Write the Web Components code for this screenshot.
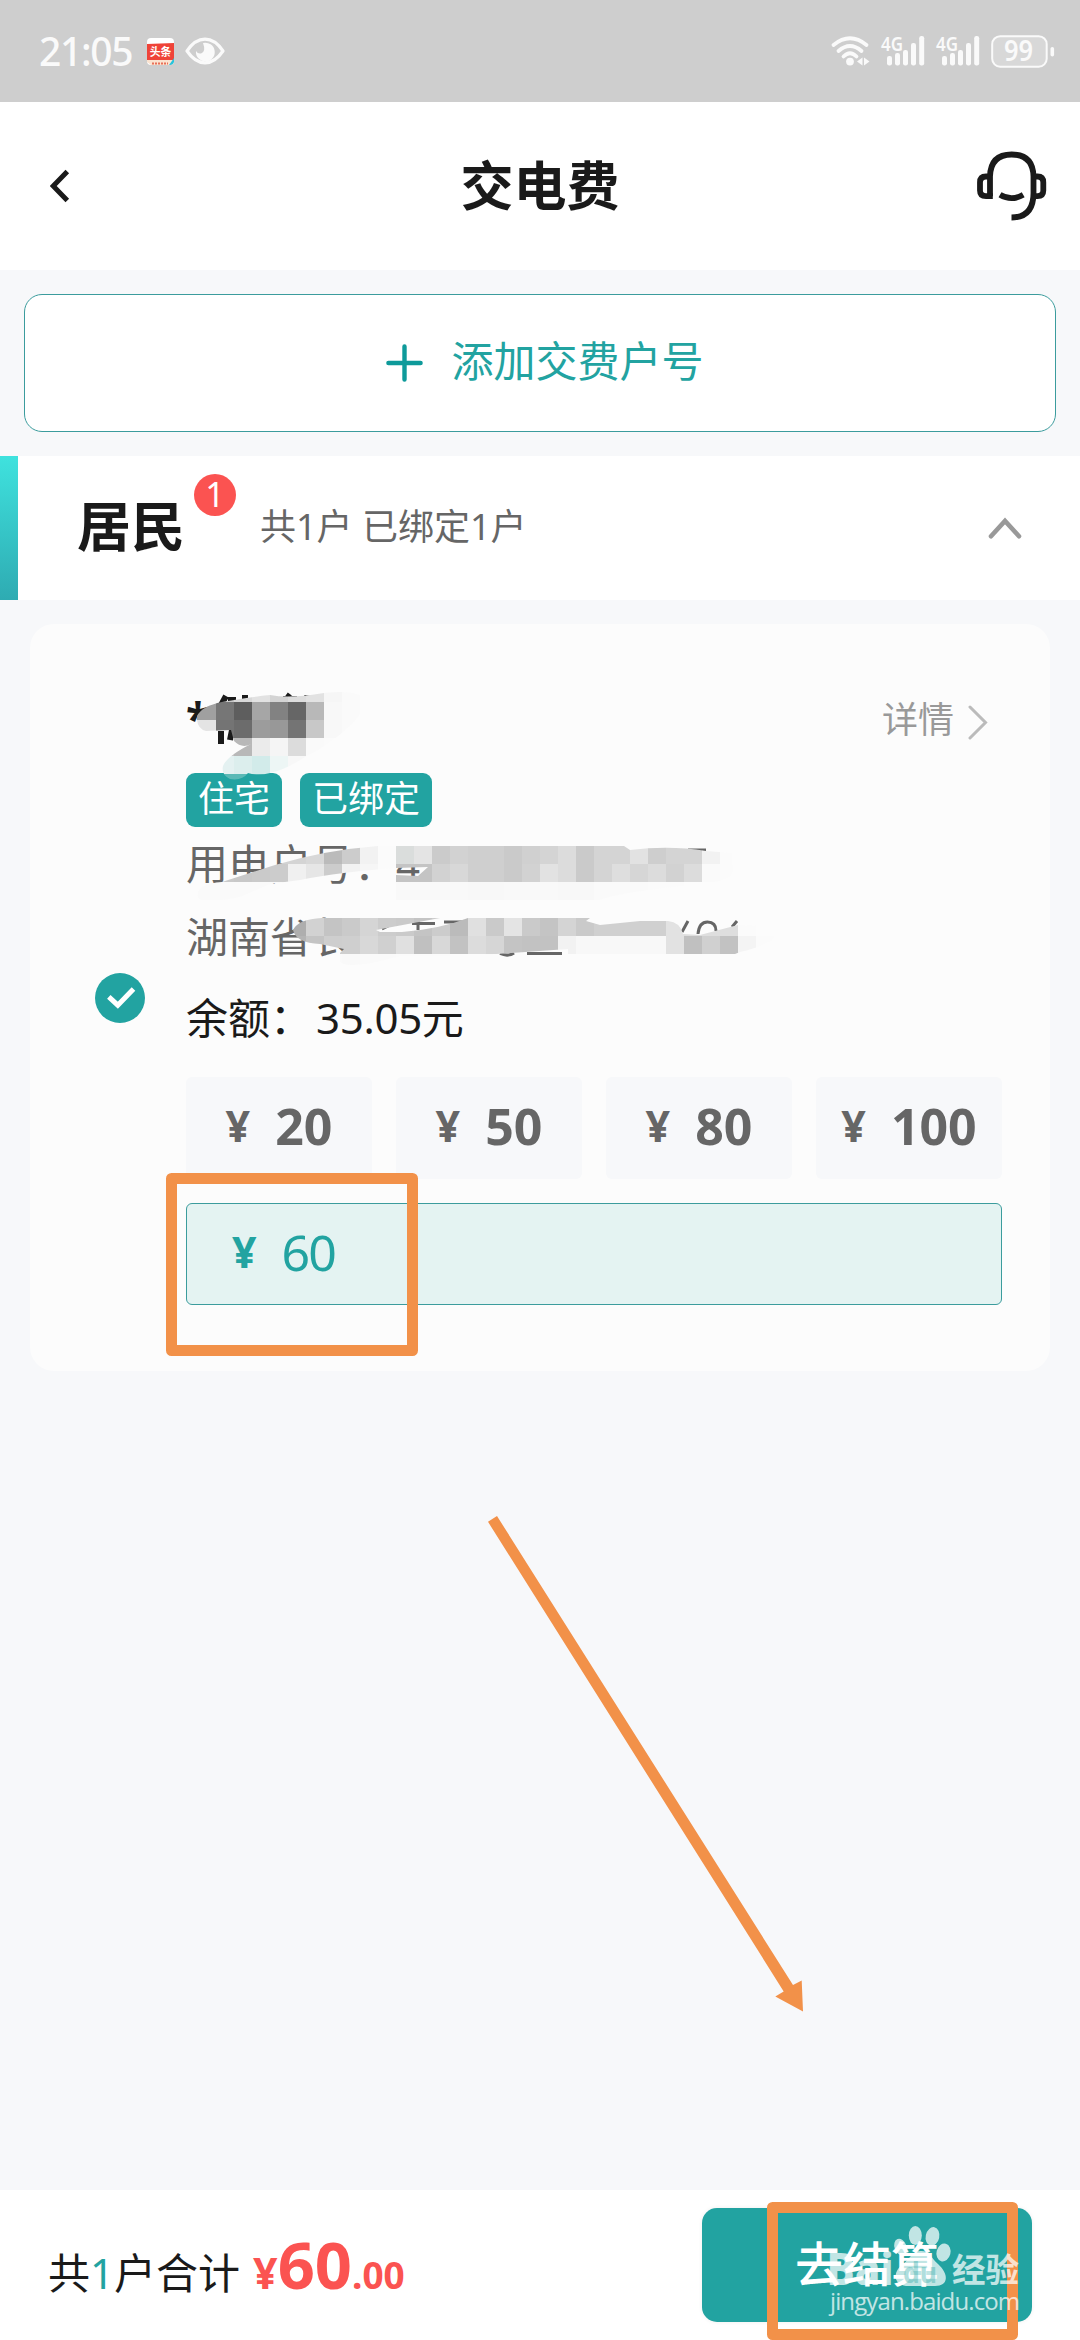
<!DOCTYPE html>
<html lang="zh-CN">
<head>
<meta charset="utf-8">
<title>交电费</title>
<style>
  html, body { margin: 0; padding: 0; }
  body {
    width: 1080px; height: 2340px; overflow: hidden; background: #f7f8fa; color: #1a1a1a;
    font-family: "Noto Sans", "Noto Sans CJK SC", sans-serif;
    --teal: #22a3a1; --red: #fb5351; --orange: #f29149;
  }
</style>
</head>
<body>
<pay-page>
  <status-bar></status-bar>
  <nav-header>交电费</nav-header>
  <add-account>添加交费户号</add-account>
  <group-header count="1">居民<span slot="note">共1户 已绑定1户</span></group-header>
  <account-card></account-card>
  <checkout-bar slot="footer"></checkout-bar>
  <page-marks slot="over"></page-marks>
</pay-page>
<script>
const define = (name, html, setup) => customElements.define(name, class extends HTMLElement {
  constructor() {
    super();
    const t = document.createElement('template');
    t.innerHTML = html;
    this.attachShadow({ mode: 'open' }).append(t.content.cloneNode(true));
  }
  connectedCallback() { if (setup) setup(this, this.shadowRoot); }
});

define('pay-page', `
<style>
  :host { display: flex; flex-direction: column; width: 1080px; height: 2340px; position: relative; overflow: hidden; }
  main { flex: 1; display: flex; flex-direction: column; }
</style>
<main><slot></slot></main><slot name="footer"></slot><slot name="over"></slot>`);

define('signal-icon', `
<style>:host { display: block; width: 44px; height: 30px; } svg { display: block; overflow: visible; } text { font: 600 20.5px "Noto Sans", sans-serif; }</style>
<svg width="44" height="30" viewBox="0 0 44 30" fill="#fafafa">
  <text x="0" y="15" textLength="22" lengthAdjust="spacingAndGlyphs">4G</text>
  <rect x="6" y="20" width="5" height="9.5" rx="2.2"/><rect x="14" y="17" width="5" height="12.5" rx="2.2"/>
  <rect x="22" y="14" width="5" height="15.5" rx="2.2"/><rect x="30" y="7" width="5" height="22.5" rx="2.2"/>
  <rect x="38.2" y="0" width="5" height="29.5" rx="2.2"/>
</svg>`);

define('status-bar', `
<style>
  :host { display: flex; align-items: center; justify-content: space-between; height: 102px; background: #cecece; color: #fafafa; padding: 0 25px 0 39px; box-sizing: border-box; }
  div { display: flex; align-items: center; }
  .time { font-size: 39px; line-height: 50px; width: 108px; font-weight: 500; letter-spacing: -1.3px; }
  svg { display: block; overflow: visible; }
  .eye { margin-left: 11px; }
  signal-icon { margin-left: 11px; }
  .bat { margin-left: 11px; }
</style>
<div><span class="time">21:05</span>
  <svg width="27" height="27" viewBox="0 0 27 27"><rect width="27" height="27" rx="4" fill="#fff"/><path d="M0 6L27 5V23L0 24Z" fill="#ef4338"/><path d="M0 22H27V24Q26 27 23 27H4L0 24Z" fill="#fbe3d0"/><path d="M22 27L27 20V24Q26 27 23 27Z" fill="#28c3dc"/><path d="M5 25.4H21" stroke="#e87058" stroke-width="2" stroke-dasharray="2 1"/><text x="2.800" y="17.800" font-size="10.8" font-weight="700" fill="#fff" font-family="Noto Sans CJK SC">头条</text></svg>
  <svg class="eye" width="40" height="28" viewBox="0 0 40 28"><path d="M2 14Q10 2.2 20 2.2Q30 2.2 38 14Q30 25.8 20 25.8Q10 25.8 2 14Z" fill="none" stroke="#fafafa" stroke-width="3.2" stroke-linejoin="round"/><path d="M18 6A9.4 9.4 0 1 1 11 14Q13 17.4 16.5 16.3Q21 14 18 6Z" fill="#fafafa"/></svg>
</div>
<div>
  <svg width="39" height="30" viewBox="0 0 39 30"><g fill="none" stroke="#fafafa" stroke-width="3.8" stroke-linecap="round"><path d="M2.5 9Q19 -4.5 35.5 9"/><path d="M7.5 15Q19 5 30.5 15"/><path d="M12.5 20.5Q19 14.2 25.5 20.5"/></g><circle cx="19" cy="25.6" r="3.9" fill="#fafafa"/><path d="M31.5 21.5V29.5L26 25.5ZM33 21.5V29.5L38.5 25.5Z" fill="#fafafa"/></svg>
  <signal-icon></signal-icon><signal-icon></signal-icon>
  <svg class="bat" width="64" height="33" viewBox="0 0 64 33"><rect x="1.2" y="1.2" width="54.5" height="30.5" rx="8" fill="#d8d8d8" stroke="#fafafa" stroke-width="2"/><rect x="59.5" y="12" width="3.6" height="9.5" rx="1.8" fill="#fafafa"/><text x="13" y="26" font-size="28" font-weight="600" textLength="29" lengthAdjust="spacingAndGlyphs" fill="#fafafa" font-family="Noto Sans">99</text></svg>
</div>`);

define('nav-header', `
<style>
  :host { display: flex; align-items: center; justify-content: space-between; height: 168px; background: #fff; padding: 0 33px 0 50px; box-sizing: border-box; }
  h1 { margin: 0; font-size: 53px; line-height: 70px; font-weight: 700; }
  svg { display: block; } .l { width: 53px; }
</style>
<div class="l"><svg width="20" height="34" viewBox="0 0 20 34" fill="none" stroke="#1a1a1a" stroke-width="5"><path d="M17.3 2.5L3.2 17L17.3 31.5"/></svg></div>
<h1><slot></slot></h1>
<svg width="70" height="70" viewBox="0 0 70 70" fill="none" stroke="#1a1a1a" stroke-width="5.8"><path d="M13 45.2V25.5Q13.500 3.500 34.7 3.5Q56 3.500 56.5 25.5V42Q56.500 66.500 34.5 66.5"/><path d="M13 25.5H9Q3 25.5 3 31.5V39.5Q3 45.2 9 45.2H15.8"/><path d="M56.5 25.5H60.5Q66.3 25.5 66.3 31.5V39.5Q66.3 45.2 60.5 45.2H56.5"/><path d="M23 43.8Q34.5 50.5 46.2 43.8"/></svg>`);

define('add-account', `
<style>
  :host { display: flex; align-items: center; justify-content: center; gap: 28px; height: 138px; box-sizing: border-box; margin: 24px; border: 1px solid #3b9c9d; border-radius: 18px; background: #fff; color: var(--teal); font-size: 42px; line-height: 60px; padding: 0 0 4px 10px; }
  svg { display: block; position: relative; top: 2px; }
</style>
<svg width="37" height="38" viewBox="0 0 37 38" stroke="#0e9a9a" stroke-width="4.4" stroke-linecap="round"><path d="M2.4 19H34.6M18.5 2.4V35.6"/></svg><slot></slot>`);

define('group-header', `
<style>
  :host { display: flex; align-items: center; height: 144px; background: #fff; box-sizing: border-box; padding-right: 58px; }
  .bar { width: 18px; height: 144px; background: linear-gradient(#3fe2de, #2eabb2); margin-right: 59px; }
  .name { font-size: 54px; font-weight: 700; line-height: 70px; margin-bottom: 5px; }
  .badge { align-self: flex-start; margin: 18px 0 0 9px; width: 42px; height: 42px; border-radius: 50%; background: var(--red); color: #fff; font-size: 34px; line-height: 40px; text-align: center; }
  .note { font-size: 36px; line-height: 50px; color: #666; margin: 0 auto 3px 24px; white-space: nowrap; }
  svg { display: block; }
</style>
<div class="bar"></div><span class="name"><slot></slot></span><span class="badge"></span><span class="note"><slot name="note"></slot></span>
<svg width="34" height="22" viewBox="0 0 34 22" fill="none" stroke="#999" stroke-width="4.6" stroke-linecap="round"><path d="M3 19.2L17 4L31 19.2"/></svg>`,
(el, r) => { r.querySelector('.badge').textContent = el.getAttribute('count'); });

define('amount-tile', `
<style>
  :host { flex: 1; display: flex; align-items: center; justify-content: center; gap: 25px; height: 102px; border-radius: 6px; background: #f7f8fa; color: #666; font-weight: 700; padding-bottom: 5px; box-sizing: border-box; }
  .y { font-size: 43px; line-height: 60px; } .n { font-size: 50px; line-height: 60px; }
  :host([active]) { border: 1px solid #3b9c9d; background: #e4f3f2; color: var(--teal); justify-content: flex-start; padding-left: 45px; }
  :host([active]) .n { font-weight: 400; letter-spacing: -2px; }
</style>
<span class="y">¥</span><span class="n"><slot></slot></span>`);

define('tag-chip', `
<style>:host { display: block; height: 54px; padding: 0 12px; border-radius: 9px; background: var(--teal); color: #fff; font-size: 36px; line-height: 52px; }</style><slot></slot>`);

define('account-card', `
<style>
  :host { display: flex; align-items: center; margin: 24px 30px 0; height: 747px; border-radius: 24px; background: #fcfcfc; box-sizing: border-box; padding: 0 48px 0 65px; position: relative; }
  .check { width: 50px; margin-right: 41px; display: block; }
  .body { flex: 1; height: 699px; padding-top: 48px; box-sizing: border-box; align-self: flex-start; }
  .head { display: flex; justify-content: space-between; align-items: center; height: 96px; }
  .name { font-size: 44px; font-weight: 700; line-height: 60px; margin-bottom: 4px; }
  .more { display: flex; align-items: center; gap: 14px; color: #999; font-size: 36px; line-height: 50px; padding-right: 14px; }
  .more svg { display: block; position: relative; top: 2px; }
  .tags { display: flex; gap: 18px; margin-top: 5px; }
  .row { font-size: 42px; color: #666; white-space: nowrap; display: flex; align-items: center; box-sizing: border-box; padding-bottom: 6px; }
  .num { margin-left: 4px; letter-spacing: -.3px; }
  .grid { display: flex; gap: 24px; margin: 14px 0 24px; }
  #mosaic { position: absolute; left: 150px; top: 56px; }
</style>
<svg class="check" width="50" height="50" viewBox="0 0 50 50"><circle cx="25" cy="25" r="25" fill="#22a3a1"/><path d="M13.8 23.8L22.8 32.2L38.5 16" fill="none" stroke="#fff" stroke-width="5"/></svg>
<div class="body">
  <div class="head"><span class="name">*</span><span class="more">详情<svg width="20" height="35" viewBox="0 0 20 35" fill="none" stroke="#bbb" stroke-width="3" stroke-linecap="round"><path d="M2 2L17.5 17.5L2 33"/></svg></span></div>
  <div class="tags"><tag-chip>住宅</tag-chip><tag-chip>已绑定</tag-chip></div>
  <div class="row" style="height:74px">用电户号：4</div>
  <div class="row" style="height:72px">湖南省长</div>
  <div class="row" style="height:90px;color:#1a1a1a">余额：<span class="num">35.05元</span></div>
  <div class="grid"><amount-tile>20</amount-tile><amount-tile>50</amount-tile><amount-tile>80</amount-tile><amount-tile>100</amount-tile></div>
  <amount-tile active>60</amount-tile>
</div>
<svg id="mosaic" width="600" height="300" viewBox="180 680 600 300">
  <defs>
    <clipPath id="c1"><path d="M197 716Q202 706 222 702Q250 697 270 695Q290 699 324 693Q350 690 362 696Q368 708 352 724Q330 745 305 757Q285 770 270 773Q258 776 248 773Q242 781 230 779Q221 775 223 766Q227 756 251 744Q242 749 234 741L231 730L206 731Q198 729 197 720Z"/></clipPath>
    <clipPath id="c2"><path d="M222 882L275 865Q325 850 378 846H624L630 850Q670 845 706 851L732 853V865Q740 880 700 884Q620 892 600 900H396V875L418 876L428 867L396 868Q340 872 300 880L270 884L240 897Q200 905 198 897Q195 884 222 882Z"/></clipPath>
    <clipPath id="c3"><path d="M293 930Q298 919 322 918H440L376 930L380 932L402 932Q440 929 468 918H590L586 921L600 925L640 921H668Q680 922 683 934L700 935L738 925L770 926Q790 940 740 952L735 954H568V949L525 952L470 956H400Q350 970 340 962V953L344 949L320 944Q296 943 293 930Z"/></clipPath>
  </defs>
  <g fill="none" stroke="#1a1a1a" stroke-width="6"><path d="M219 709L226 696M245 695V702M228 700H236M221 731V744M230 740L232 730"/><path d="M283 699H297M304 698L310 699M286 695L290 698"/></g>
  <g fill="none" stroke="#666" stroke-width="3"><path d="M412 923.5H435M382 929L392 924M444 922H467M418 918V930M688 850H706M500 953.5Q508 957 514 953M527 953.5H562"/><path d="M688 921L682 932M698 934Q699 922 707.500 922Q716 922 716 931M737 921L732 927"/></g>
  <g id="m1" clip-path="url(#c1)"></g><g id="m2" clip-path="url(#c2)"></g><g id="m3" clip-path="url(#c3)"></g>
</svg>`, (el, r) => {
  // Each row: y, first x, then one colour per 18px cell.
  const paint = (id, rows) => {
    r.getElementById(id).innerHTML = rows.map(([y, x0, list]) => list.split(' ').map((c, i) =>
      `<rect x="${x0 + i * 18}" y="${y}" width="18.1" height="18.1" fill="#${c.length === 2 ? c + c + c : c}"/>`).join('')).join('');
  };
  paint('m1', [
    [684, 198, 'e0 c8 d8 e2 d4 dd e2 f6 fa fc'],
    [702, 180, 'a0 a0 76 5e a6 82 66 b8 f8 fa fc'],
    [720, 180, 'e4 e4 74 6c 9c 98 74 c8 f8 fa'],
    [738, 216, 'c4 b8 eb f5 dc fa fb'],
    [756, 216, 'e4f1f1 dceeed d2ebea edf6f5 f8 fb'],
    [774, 216, '5ab9b6 5ab9b6 76c5c2 c8e8e6']]);
  paint('m2', [
    [846, 216, 'ca c8 cc d2 d4 d8 bb cc f2 fb dadddc e4 cb d2 cf cf ca d0 d4 dc ca d4 d4 e2 ce d4 d4 f2 fb'],
    [864, 216, 'ca c8 ca cc f0 e6 cc f2 f6 fb c4 c4 d2 d8 cf cf ca d2 e2 dc ca d4 de d6 dc d2 dc fa fb'],
    [882, 180, 'fa fa fa fa fa fa fb fb fb fc fc fc f9 f9 f9 f9 f8 f8 f9 f9 f9 f8 f8 fa fa fa fb fb fc fc']]);
  paint('m3', [
    [918, 288, 'ae d2 c4 ca d5 cc ca c4 cc bb e0 ca e4 ca c4 d4 ca d0 d0 d0 d0 e2 de de de fb fc'],
    [936, 288, 'b4 c4 ce cf d8 d0 e0 c0 d8 c2 dc d6 c4 c2 c2 f2 f8 f8 f8 f8 f8 e2 c0 d0 c2 f4 fb'],
    [954, 324, 'fa f9 fa fa fb fb fb fc fc fc fc fc']]);
});

define('checkout-bar', `
<style>
  :host { display: flex; align-items: flex-start; justify-content: space-between; height: 150px; background: #fff; padding: 18px 48px 0; box-sizing: border-box; }
  .sum { display: flex; align-items: baseline; font-size: 42px; line-height: 90px; white-space: nowrap; padding-top: 20px; }
  b { color: var(--red); } .one { color: var(--teal); }
  .y { margin-left: 13px; font-size: 43px; } .big { font-size: 65px; line-height: 60px; } .c { font-size: 37px; }
  button { font: inherit; width: 330px; height: 114px; border: 0; border-radius: 15px; background: var(--teal); color: #fff; font-size: 48px; font-weight: 500; padding: 0 0 9px; box-shadow: 0 0 4px #0001; }
</style>
<div class="sum"><span>共<span class="one">1</span>户合计</span><b class="y">¥</b><b class="big">60</b><b class="c">.00</b></div>
<button>去结算</button>`);

define('page-marks', `
<style>:host { position: absolute; left: 0; top: 0; width: 1080px; height: 2340px; pointer-events: none; } svg { display: block; }</style>
<svg width="1080" height="2340" viewBox="0 0 1080 2340">
  <g fill="none" stroke="#f29149" stroke-width="11" stroke-linejoin="round"><rect x="171.500" y="1178.500" width="241" height="172"/><rect x="772.500" y="2207.500" width="240" height="127"/></g>
  <path d="M488 1521.800L497 1516L793 1985L801.700 1980.400L803 2011.400L775.300 1996.400L783.700 1991.400Z" fill="#f29149"/>
  <g fill="#fff" opacity=".72">
    <ellipse cx="900.500" cy="2247" rx="6" ry="8.500" transform="rotate(-20 900.500 2247)"/>
    <ellipse cx="915.300" cy="2235.500" rx="6.500" ry="9.500"/><ellipse cx="932.500" cy="2236.500" rx="6.800" ry="9.500" transform="rotate(12 932.500 2236.500)"/>
    <ellipse cx="943.500" cy="2252.500" rx="7" ry="9" transform="rotate(15 943.500 2252.500)"/>
    <path d="M921 2251C930 2251 931 2258 938 2264C949 2274 949 2286 935 2286H906C893 2284 893 2272 902 2265C910 2259 912 2251 921 2251Z"/>
    <text x="826.500" y="2284.500" font-family="Noto Sans" font-weight="800" font-size="44.500" textLength="67" lengthAdjust="spacingAndGlyphs">Bai</text>
    <text x="952" y="2281.500" font-family="Noto Sans CJK SC" font-weight="700" font-size="33.500">经验</text>
    <text x="830" y="2310" font-family="Open Sans" font-weight="500" font-size="24" textLength="190" lengthAdjust="spacing">jingyan.baidu.com</text>
  </g>
  <text x="903" y="2283" font-family="Noto Sans" font-weight="700" font-size="28" fill="#22a3a1" opacity=".35" textLength="34" lengthAdjust="spacingAndGlyphs">du</text>
</svg>`);
</script>
</body>
</html>
